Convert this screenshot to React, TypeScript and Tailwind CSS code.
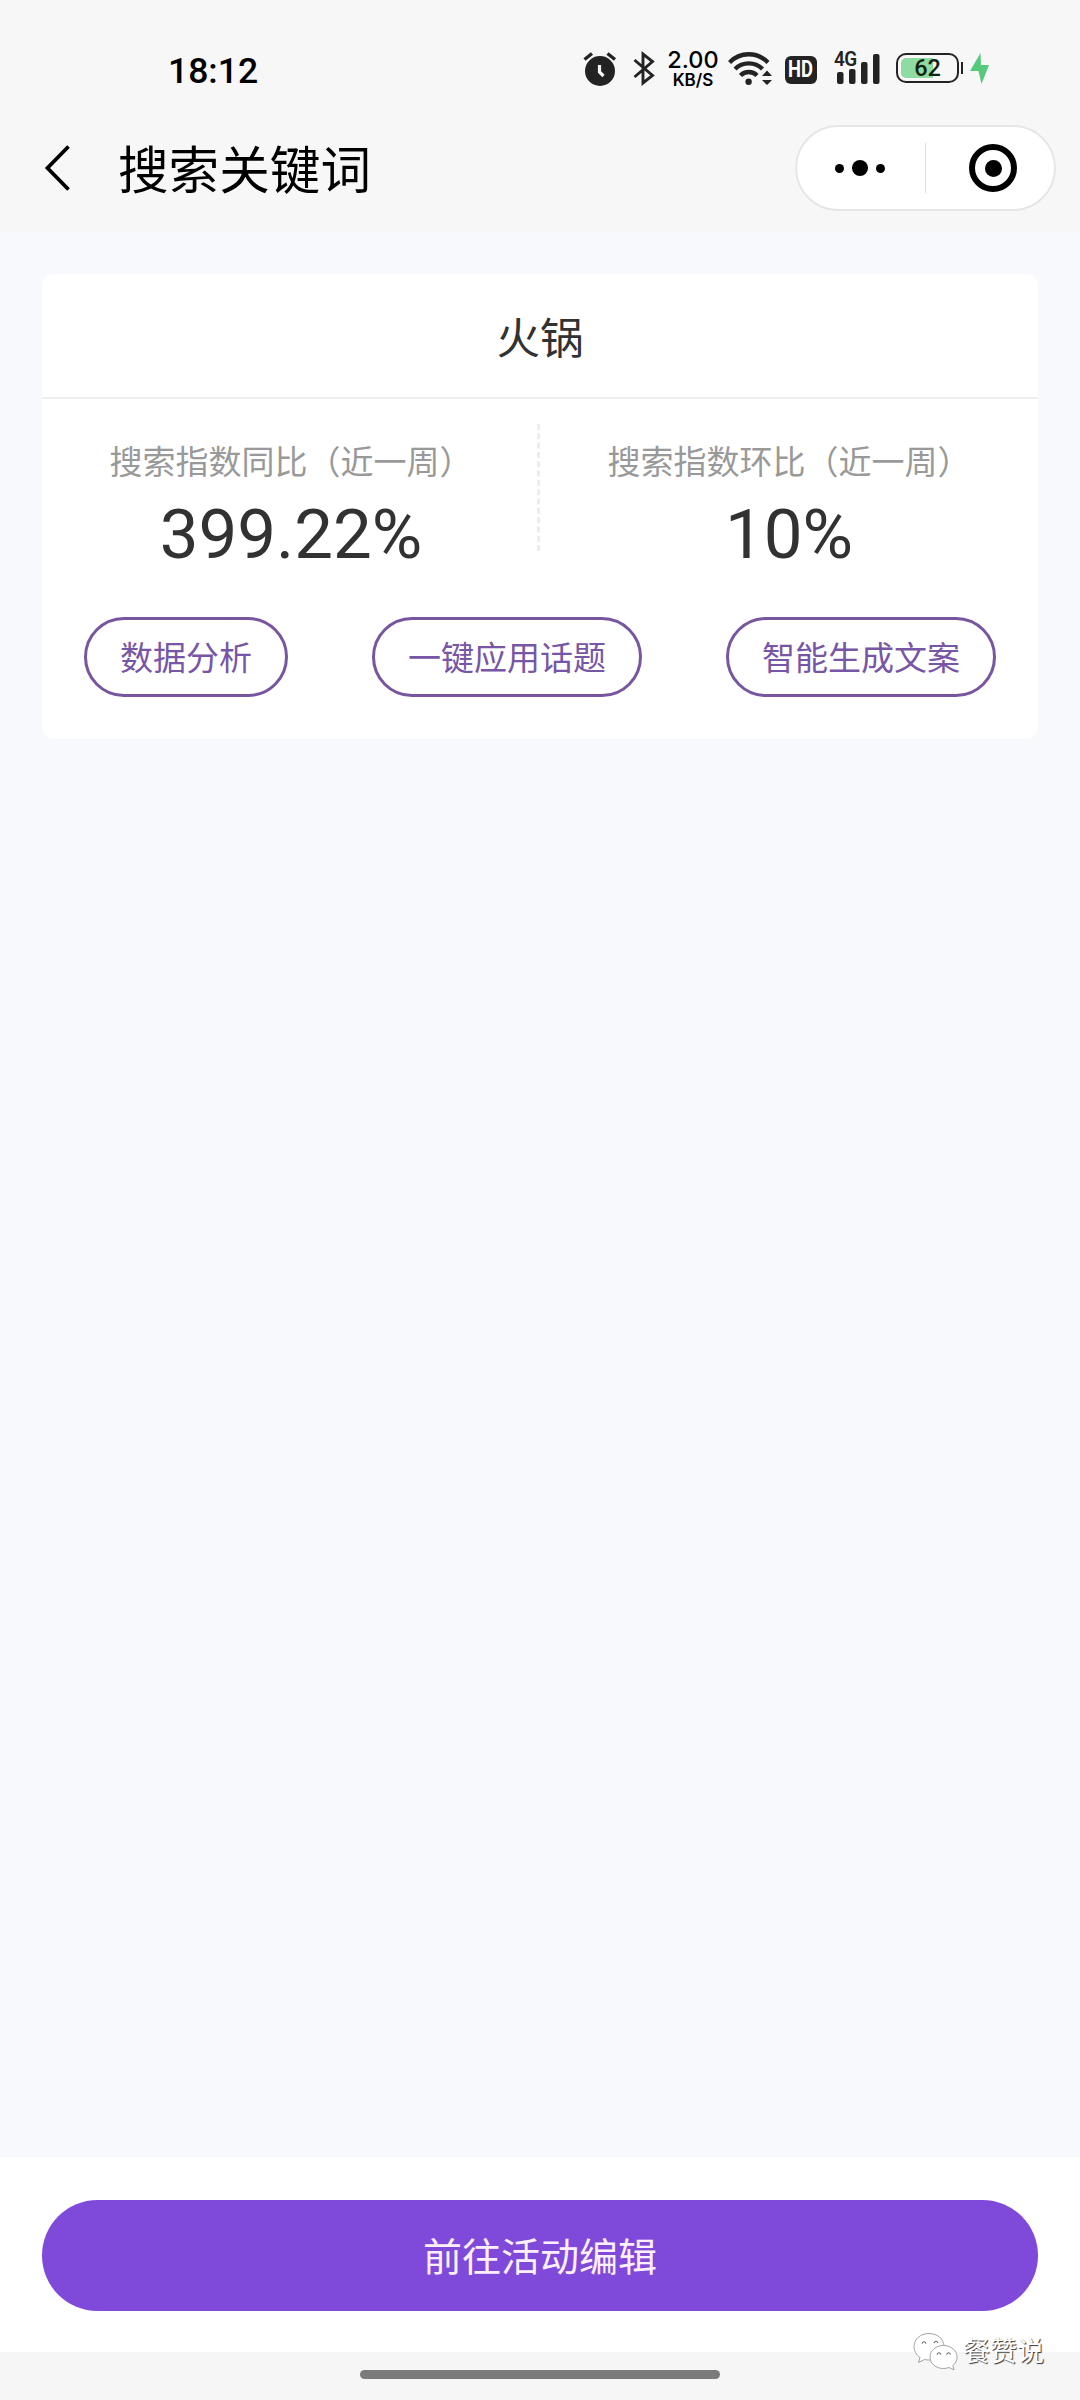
import type { ReactNode } from "react";

const AlarmIcon = () => (
  <svg className="h-[36px] w-[34px]" viewBox="0 0 34 36" fill="none">
    <circle cx="17" cy="21" r="15" fill="#232323" />
    <path d="M1.5 9.5L9 3.5M32 9.5L24.5 3.5" stroke="#232323" strokeWidth="3.4" />
    <path d="M16.5 15V22L20.5 26" stroke="#f7f7f7" strokeWidth="3.2" />
  </svg>
);

const BluetoothIcon = () => (
  <svg className="h-[36px] w-[22px]" viewBox="0 0 22 36" fill="none">
    <path
      d="M1.5 10L19.5 25.5L10 33V4L19.5 11.5L1.5 27"
      stroke="#232323"
      strokeWidth="2.9"
    />
  </svg>
);

const WifiIcon = () => (
  <svg className="h-[36px] w-[46px]" viewBox="0 0 46 36" fill="none">
    <g stroke="#232323" strokeWidth="4.3">
      <path d="M1.5 12.5C12 1.5 29 1.5 40 12.5" />
      <path d="M7 19C14.5 11.5 27 11.5 34.5 19" />
      <path d="M12.5 25.5C17 20.8 24.5 20.8 29 25.5" />
    </g>
    <circle cx="20.6" cy="31.8" r="3.2" fill="#232323" />
    <path d="M34 26L39 20.5L44 26ZM34 30H44L39 35Z" fill="#232323" />
  </svg>
);

const SignalIcon = () => (
  <svg className="h-[36px] w-[46px]" viewBox="0 0 46 36" fill="#232323">
    <rect x="3" y="22" width="6.5" height="12" rx="2" />
    <rect x="15" y="19" width="6.5" height="15" rx="2" />
    <rect x="27" y="12" width="6.5" height="22" rx="2" />
    <rect x="39" y="4" width="6.5" height="30" rx="2" />
  </svg>
);

const StatusBar = () => (
  <div className="flex h-[104px] items-start pt-[50px] pl-[168px] font-['Roboto','Noto_Sans_CJK_SC',sans-serif] text-[#232323]">
    <span className="w-[415px] pt-px text-[35.5px] leading-[41px] font-medium text-black">
      18:12
    </span>
    <AlarmIcon />
    <span className="ml-[16px] flex">
      <BluetoothIcon />
    </span>
    <div className="ml-[11px] flex w-[54px] flex-col items-center font-['Inter',sans-serif] whitespace-nowrap text-black">
      <span className="text-[23.5px] leading-[20px] font-medium">2.00</span>
      <span className="mt-[1px] text-[17px] leading-[18px] font-semibold">
        KB/S
      </span>
    </div>
    <span className="ml-[8px] flex">
      <WifiIcon />
    </span>
    <span className="mt-[6px] ml-[11px] flex h-[28px] w-[32px] items-center justify-center rounded-[6px] bg-[#232323] leading-[28px] text-white">
      <span className="scale-x-[0.8] text-[23px] font-bold">HD</span>
    </span>
    <div className="relative ml-[17px]">
      <SignalIcon />
      <span className="absolute top-0 left-0 origin-left scale-x-[0.9] text-[21px] leading-[19px] font-semibold tracking-[-0.5px]">
        4G
      </span>
    </div>
    <div className="mt-[3px] ml-[16px] flex items-center">
      <div className="relative h-[30px] w-[63px] rounded-[10px] border-[2.5px] border-[#232323] p-[3px]">
        <div className="h-full w-[32px] rounded-l-[5px] bg-[#8fdba4]" />
        <span className="absolute inset-0 text-center text-[23.5px] leading-[27px] font-medium text-[#10240f]">
          62
        </span>
      </div>
      <div className="ml-[2px] h-[12px] w-[2px] bg-[#232323]" />
    </div>
    <svg className="mt-px ml-[6px] h-[34px] w-[22px]" viewBox="0 0 22 34">
      <path d="M11.5 2L1 20H9.5L12.5 33L20 14H12Z" fill="#56c97c" />
    </svg>
  </div>
);

const NavBar = () => (
  <header className="flex h-[128px] items-start pl-[44px]">
    <svg className="mt-[41px] h-[46px] w-[27px]" viewBox="0 0 27 46" fill="none">
      <path d="M24.5 1.5L3.5 23L24.5 44.5" stroke="#000" strokeWidth="3.8" />
    </svg>
    <h1 className="mt-[30px] ml-[47px] text-[50.6px] leading-[76px] text-black">
      搜索关键词
    </h1>
    <div className="mt-[21px] mr-[24px] ml-auto flex h-[86px] w-[261px] items-center rounded-full border-2 border-[#e6e6e6] bg-white">
      <div className="flex w-[128px] items-center justify-center gap-[8px] pr-[2px]">
        <i className="size-[9px] rounded-full bg-black" />
        <i className="size-[16px] rounded-full bg-black" />
        <i className="size-[9px] rounded-full bg-black" />
      </div>
      <div className="h-[50px] w-px bg-[#dcdcdc]" />
      <div className="flex w-[128px] justify-center pl-[6px]">
        <div className="flex size-[48px] items-center justify-center rounded-full border-[6px] border-black">
          <i className="size-[17px] rounded-full bg-black" />
        </div>
      </div>
    </div>
  </header>
);

interface StatProps {
  label: string;
  value: string;
}
const Stat = ({ label, value }: StatProps) => (
  <div className="flex flex-col items-center pt-[15px]">
    <span className="text-[33px] leading-[48px] text-[#999]">{label}</span>
    <span className="mt-[7px] text-[69px] leading-[82px] text-[#323232]">
      {value}
    </span>
  </div>
);

const PillButton = ({ children }: { children: ReactNode }) => (
  <button className="h-[80px] rounded-full border-[3px] border-[#77559f] px-[33px] pt-[4px] text-[33px] leading-[70px] text-[#7756a6]">
    {children}
  </button>
);

const WeChatIcon = () => (
  <svg
    className="h-[40px] w-[46px]"
    viewBox="0 0 46 40"
    fill="#fff"
    stroke="#a3a3a3"
    strokeWidth="1"
  >
    <path d="M16 1.5C7.5 1.5 1 7 1 14.5C1 19 3.5 23 7 25.5L5.5 30.5L11.5 27.5C21 30 31 24 31 14.5C31 7 24.5 1.5 16 1.5Z" />
    <path d="M30.5 13.5C23 13.5 17 18.5 17 25C17 31.5 23 36.5 30.5 36.5C32.5 36.5 34.5 36 36.2 35.5L41 38L39.8 33.5C42.5 31.5 44 28.5 44 25C44 18.5 38 13.5 30.5 13.5Z" />
    <path
      d="M9 11.5Q11 8 13 11.5M21 11Q23 7.5 25 11M24 22.5Q26 19 28 22.5M33.5 22.5Q35.5 19 37.5 22.5"
      fill="none"
      stroke="#666"
      strokeWidth="1.2"
    />
  </svg>
);

const App = () => (
  <div className="relative flex h-[2400px] w-[1080px] flex-col overflow-hidden bg-[#f8f9fd] font-['Roboto','Noto_Sans_CJK_SC',sans-serif]">
    <div className="bg-[#f7f7f7]">
      <StatusBar />
      <NavBar />
    </div>

    <main className="flex-1 px-[42px] pt-[42px]">
      <section className="h-[465px] rounded-[12px] bg-white">
        <h2 className="h-[125px] border-b-2 border-[#efefef] pt-[3px] text-center text-[43.5px] leading-[126px] text-[#323232]">
          火锅
        </h2>
        <div className="grid grid-cols-2 pt-[25px]">
          <div className="h-[127px] border-r-[3px] border-dashed border-[#ececec] pl-[3px]">
            <Stat label="搜索指数同比（近一周）" value="399.22%" />
          </div>
          <Stat label="搜索指数环比（近一周）" value="10%" />
        </div>
        <div className="mt-[41px] flex h-[80px] justify-between px-[42px]">
          <PillButton>数据分析</PillButton>
          <PillButton>一键应用话题</PillButton>
          <PillButton>智能生成文案</PillButton>
        </div>
      </section>
    </main>

    <div className="h-[195px] bg-white px-[42px] pt-[43px]">
      <button className="h-[111px] w-full rounded-full bg-[#7f4ad9] pt-[5px] text-[39px] leading-[106px] text-[#fdeffe]">
        前往活动编辑
      </button>
    </div>
    <footer className="flex h-[48px] justify-center bg-[#f6f6f6] pt-[18px]">
      <div className="h-[9px] w-[360px] rounded-full bg-[#7b7b7b]" />
    </footer>

    <div className="absolute top-[2331px] left-[913px] flex items-center gap-[4px]">
      <WeChatIcon />
      <span className="pt-px text-[27px] leading-[40px] text-white [text-shadow:1px_1px_1px_#333]">
        餐赞说
      </span>
    </div>
  </div>
);

export default App;
